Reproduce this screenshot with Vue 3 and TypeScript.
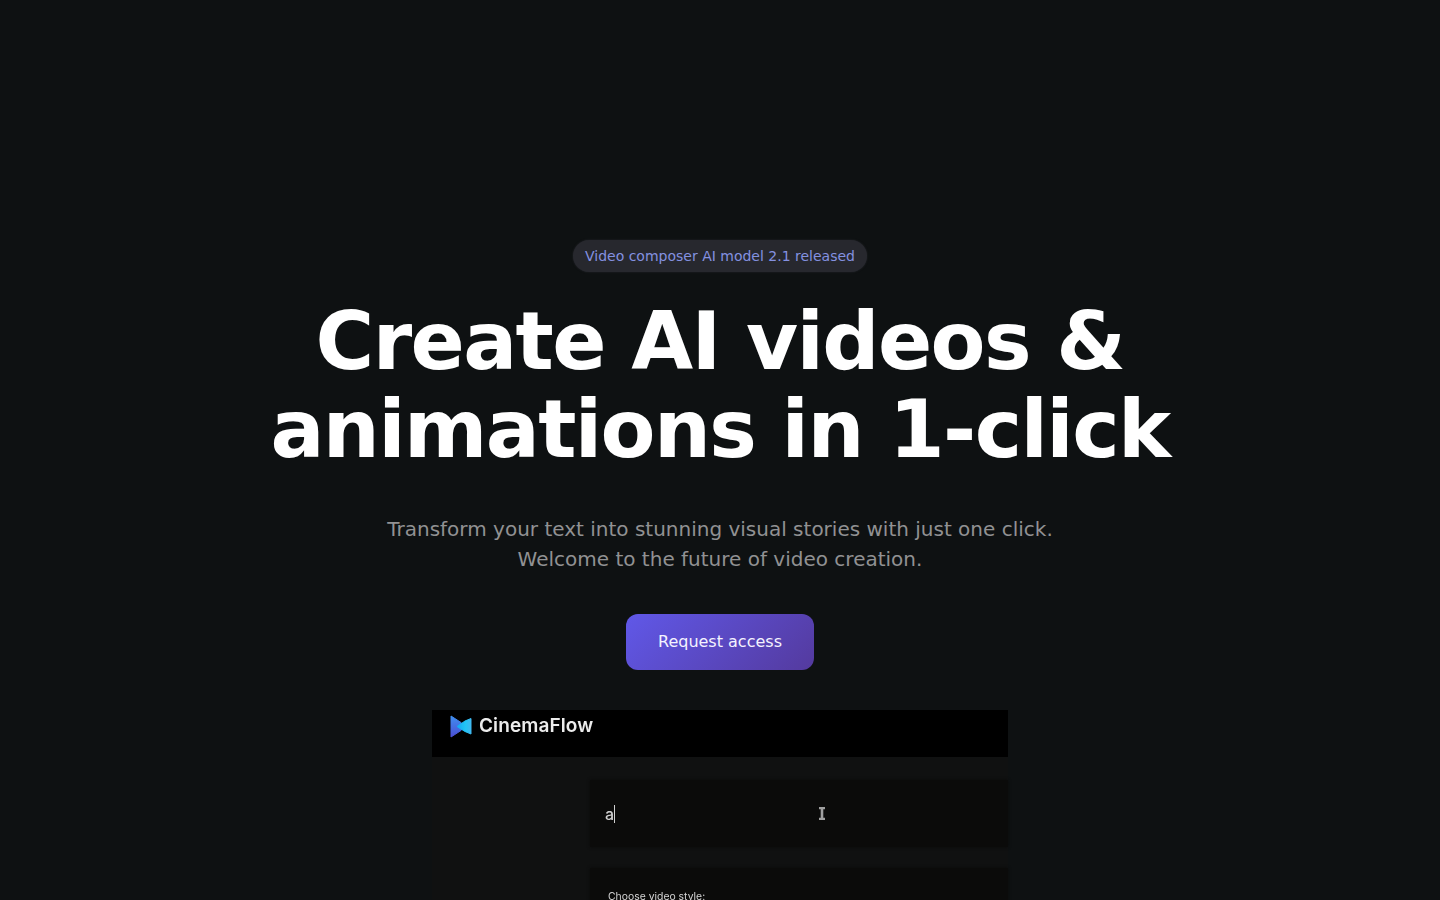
<script setup lang="ts">
const title = ['Create AI videos &', 'animations in 1-click']
</script>

<template>
  <main class="page">
    <section class="hero">
      <span class="badge">Video composer AI model 2.1 released</span>
      <h1 class="title">
        <span v-for="line in title" :key="line" class="title-line">{{ line }}</span>
      </h1>
      <p class="lead">
        Transform your text into stunning visual stories with just one click.<br />
        Welcome to the future of video creation.
      </p>
      <button class="cta" type="button">Request access</button>
    </section>

    <section class="video">
      <header class="video-bar">
        <svg class="logo" viewBox="0 0 22 23" width="22" height="23" aria-hidden="true">
          <defs>
            <linearGradient id="logoLeft" x1="0" y1="0" x2="0" y2="1">
              <stop offset="0" stop-color="#3f8ff0" />
              <stop offset="1" stop-color="#4c4ed4" />
            </linearGradient>
            <linearGradient id="logoRight" x1="0" y1="0" x2="1" y2="0">
              <stop offset="0" stop-color="#12a8f2" />
              <stop offset="0.6" stop-color="#22c4f6" />
              <stop offset="1" stop-color="#3fb8f0" />
            </linearGradient>
          </defs>
          <path d="M1 1 L11 7.5 L14 11.5 L11 15.5 L1 22 Z" fill="url(#logoLeft)" stroke="url(#logoLeft)" stroke-width="1" stroke-linejoin="round" />
          <path d="M21 3.5 V19 L15 16.5 L7 11.5 L15 6 Z" fill="url(#logoRight)" stroke="url(#logoRight)" stroke-width="1" stroke-linejoin="round" />
        </svg>
        <span class="brand">CinemaFlow</span>
      </header>
      <div class="video-body">
        <div class="prompt">
          <span class="typed">a</span><span class="caret"></span>
          <svg class="ibeam" viewBox="0 0 8 13" width="8" height="13" aria-hidden="true">
            <path d="M1 1 H7 M1 12 H7 M4 1 V12" fill="none" stroke="#a0a0a0" stroke-width="2.6" />
          </svg>
        </div>
        <div class="styles">
          <span class="styles-label">Choose video style:</span>
        </div>
      </div>
    </section>
  </main>
</template>

<style>
html,
body {
  margin: 0;
  height: 100%;
  overflow: hidden;
  background: #0e1112;
}
</style>

<style scoped>
.page {
  height: 900px;
  overflow: hidden;
  display: flex;
  flex-direction: column;
  align-items: center;
  padding-top: 240px;
  box-sizing: border-box;
  background: #0e1112;
  font-family: "DejaVu Sans", sans-serif;
}

.hero {
  display: flex;
  flex-direction: column;
  align-items: center;
}

.badge {
  height: 32px;
  display: flex;
  align-items: center;
  padding: 0 12px;
  border-radius: 16px;
  background: #27282e;
  box-shadow: 0 0 2px #27282e;
  color: #8491e0;
  font-size: 14px;
  line-height: 20px;
}

.title {
  margin: 26px 0 0;
  color: #fff;
  font-size: 80px;
  font-weight: 700;
  letter-spacing: -0.02em;
  line-height: 88px;
  text-align: center;
}

.title-line {
  display: block;
}

.lead {
  margin: 40px 0 0;
  color: #919193;
  font-size: 20px;
  line-height: 30px;
  text-align: center;
}

.cta {
  width: 188px;
  height: 56px;
  margin-top: 40px;
  padding: 0 0 1px;
  border: 0;
  border-radius: 12px;
  background: linear-gradient(135deg, #6058e8, #543a9e);
  color: #f4f3ff;
  font-family: inherit;
  font-size: 16px;
}

.video {
  width: 576px;
  margin-top: 40px;
  flex: none;
  background: #101111;
  filter: blur(0.5px);
}

.video-bar {
  height: 47px;
  box-sizing: border-box;
  padding: 5px 0 0 18px;
  display: flex;
  align-items: flex-start;
  gap: 7px;
  background: #000;
}

.logo {
  flex: none;
}

.brand {
  color: #ececec;
  font-family: Inter, sans-serif;
  font-size: 19px;
  font-weight: 600;
  letter-spacing: 0.1px;
  line-height: 22px;
}

.video-body {
  padding: 23px 0 0 158px;
  display: flex;
  flex-direction: column;
  gap: 21px;
}

.prompt {
  position: relative;
  height: 67px;
  display: flex;
  align-items: center;
  padding-left: 15px;
  background: #0b0b0a;
  box-shadow: 0 0 3px #0b0b0a;
}

.typed {
  color: #cfcfcf;
  font-family: Inter, sans-serif;
  font-size: 16px;
  font-weight: 500;
}

.caret {
  width: 1px;
  height: 18px;
  background: #d0d0d0;
}

.ibeam {
  position: absolute;
  left: 228px;
  top: 27px;
}

.styles {
  height: 80px;
  padding: 22px 0 0 18px;
  background: #0b0b0a;
  box-shadow: 0 0 3px #0b0b0a;
}

.styles-label {
  display: block;
  color: #d4d4d4;
  font-family: Inter, sans-serif;
  font-size: 10.4px;
  line-height: 14px;
}
</style>
